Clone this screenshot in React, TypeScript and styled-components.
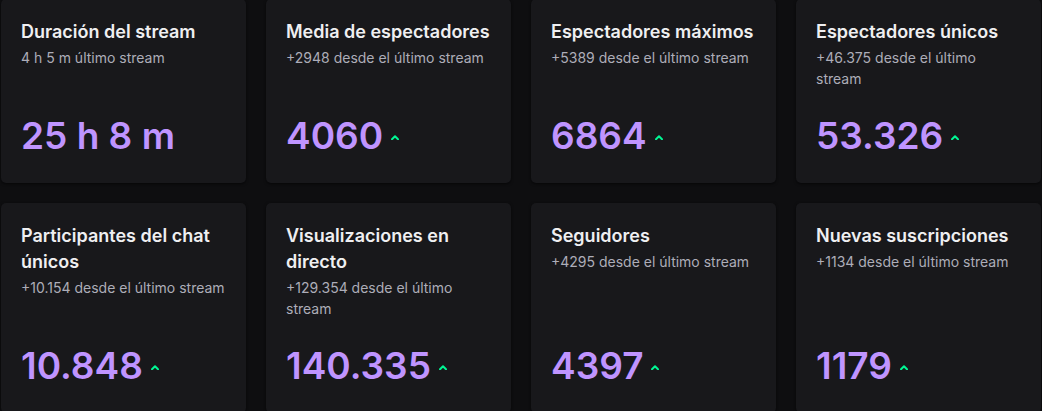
import styled, { createGlobalStyle } from 'styled-components';

type Stat = {
    title: string;
    note: string;
    value: string;
    up?: boolean;
};

const STATS: Stat[] = [
    { title: 'Duración del stream', note: '4 h 5 m último stream', value: '25 h 8 m' },
    { title: 'Media de espectadores', note: '+2948 desde el último stream', value: '4060', up: true },
    { title: 'Espectadores máximos', note: '+5389 desde el último stream', value: '6864', up: true },
    { title: 'Espectadores únicos', note: '+46.375 desde el último stream', value: '53.326', up: true },
    { title: 'Participantes del chat únicos', note: '+10.154 desde el último stream', value: '10.848', up: true },
    { title: 'Visualizaciones en directo', note: '+129.354 desde el último stream', value: '140.335', up: true },
    { title: 'Seguidores', note: '+4295 desde el último stream', value: '4397', up: true },
    { title: 'Nuevas suscripciones', note: '+1134 desde el último stream', value: '1179', up: true },
];

const UpArrow = () => (
    <Arrow width="8" height="5" viewBox="0 0 8 5">
        <path d="M1 4.2 L4 1.3 L7 4.2" fill="none" stroke="#00f593" strokeWidth="2" strokeLinecap="round" strokeLinejoin="round" />
    </Arrow>
);

const App = () => {
    return (
        <>
            <GlobalStyle />
            <Grid>
                {STATS.map(({ title, note, value, up }) => (
                    <Card key={title}>
                        <Title>{title}</Title>
                        <Note>{note}</Note>
                        <Value>
                            {value}
                            {up && <UpArrow />}
                        </Value>
                    </Card>
                ))}
            </Grid>
        </>
    );
};

export default App;

const GlobalStyle = createGlobalStyle`
    html, body {
        margin: 0;
        background: #0e0e10;
        font-family: Inter, "Noto Sans", "Liberation Sans", sans-serif;
        -webkit-font-smoothing: antialiased;
    }
`;

const Grid = styled.div`
    display: grid;
    grid-template-columns: repeat(4, 1fr);
    gap: 20px;
    padding: 0 1px;
    margin-top: -1px;
`;

const Card = styled.div`
    display: flex;
    flex-direction: column;
    padding: 20px;
    background: #18181b;
    border-radius: 5px;
    box-shadow: 0 1px 3px rgba(0, 0, 0, 0.6);
`;

const Title = styled.h3`
    margin: 0;
    font-size: 18px;
    line-height: 26px;
    font-weight: 600;
    color: #efeff1;
`;

const Note = styled.p`
    margin: 2px 0 0;
    font-size: 14px;
    line-height: 21px;
    color: #adadb8;
`;

const Value = styled.div`
    margin-top: auto;
    padding-top: 19px;
    font-size: 37px;
    line-height: 55px;
    font-weight: 600;
    color: #bf94ff;
`;

const Arrow = styled.svg`
    margin-left: 8px;
    vertical-align: 9px;
`;
